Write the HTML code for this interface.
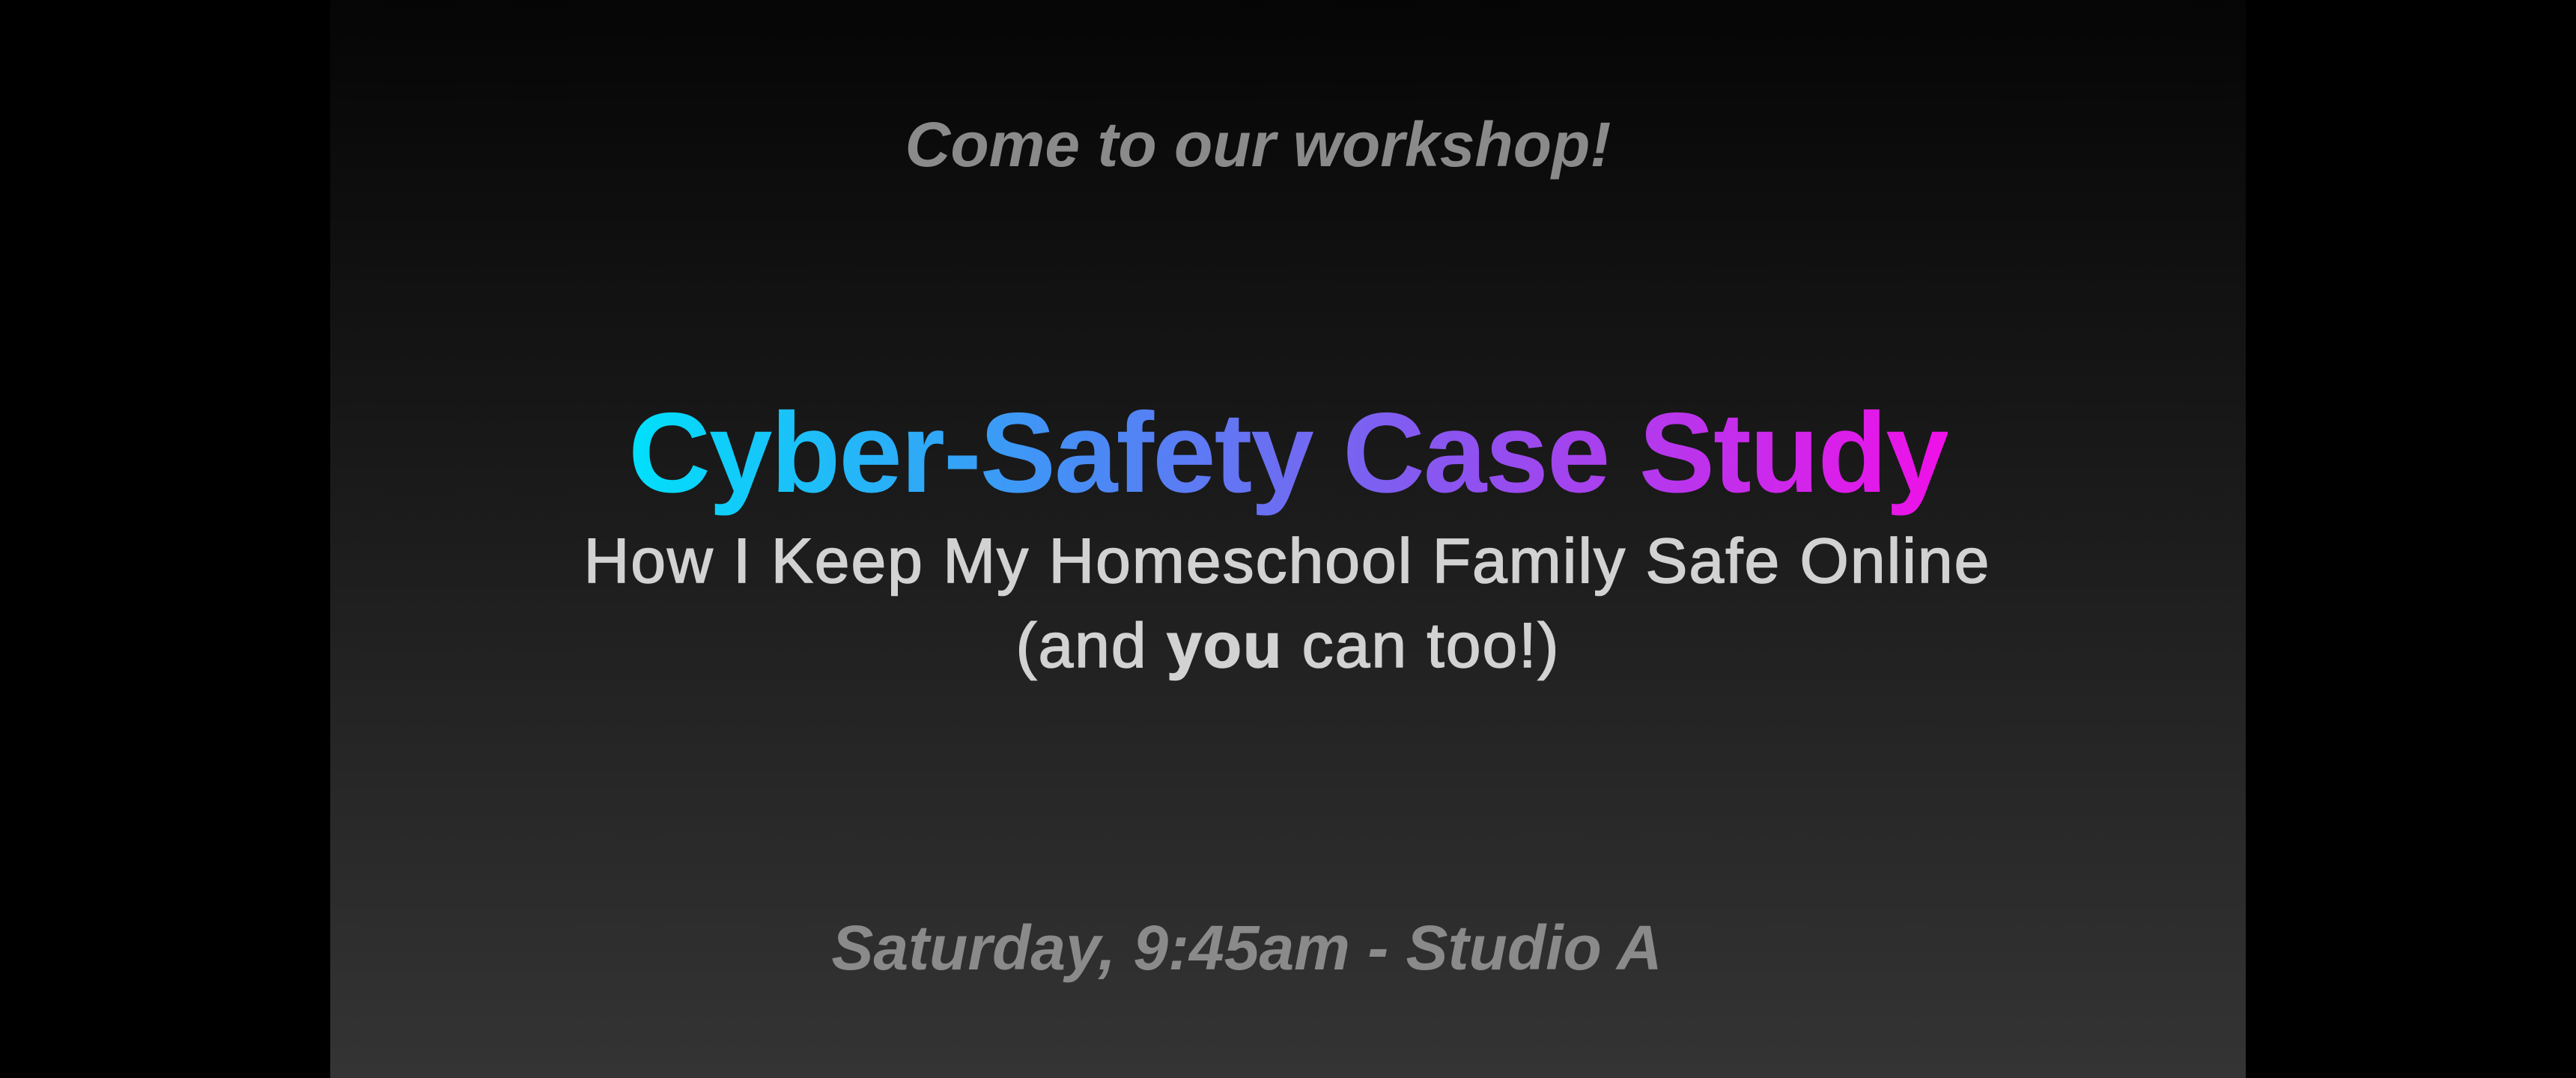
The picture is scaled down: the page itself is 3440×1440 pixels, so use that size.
<!DOCTYPE html>
<html><head><meta charset="utf-8"><style>
html,body{margin:0;padding:0;width:3440px;height:1440px;background:#000;overflow:hidden;font-family:"Liberation Sans",sans-serif;}
.panel{position:absolute;left:441px;top:0;width:2558px;height:1440px;background:linear-gradient(#050505,#343434);}
.t{position:absolute;left:0;width:3440px;text-align:center;line-height:1;white-space:nowrap;}
.it{font-style:italic;color:#8a8a8a;font-size:84px;font-weight:bold;}
.title{font-size:152px;font-weight:bold;letter-spacing:-2px;}
.title span{background:linear-gradient(90deg,#00e0fb,#4a8af5 35%,#8a55f0 62%,#f010e8);-webkit-background-clip:text;background-clip:text;color:transparent;}
.sub{font-size:84px;color:#d2d2d2;letter-spacing:2px;-webkit-text-stroke:1.6px #d2d2d2;}
</style></head><body>
<div class="panel"></div>
<div class="t it" style="top:151px;left:-40px">Come to our workshop!</div>
<div class="t title" style="top:529px;left:0"><span>Cyber-Safety Case Study</span></div>
<div class="t sub" style="top:707px;left:-1px">How I Keep My Homeschool Family Safe Online</div>
<div class="t sub" style="top:820px;left:0">(and <b>you</b> can too!)</div>
<div class="t it" style="top:1224px;left:-55px">Saturday, 9:45am - Studio A</div>
</body></html>
